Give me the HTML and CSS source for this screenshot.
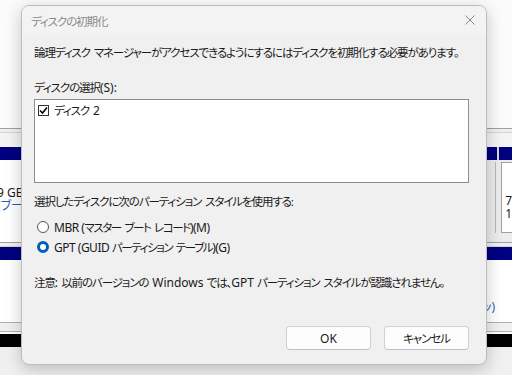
FILE: index.html
```html
<!DOCTYPE html>
<html lang="ja">
<head>
  <meta charset="UTF-8">
  <title>ディスクの初期化</title>
  <link rel="stylesheet" href="styles.css">
</head>
<body>
  <!-- ディスクの管理 (背景) -->
  <div class="backdrop">
    <div class="bd-top"></div>
    <div class="bd-rule"></div>
    <div class="bd-gap"></div>
    <div class="bd-navy">
      <span class="seg seg-b"></span>
    </div>
    <div class="bd-disk">
      <div class="bd-left">
        <span>9 GB</span>
        <span class="blue">(ブート</span>
      </div>
      <div class="bd-right">
        <div class="bd-col"></div>
        <div class="bd-box">
          <span>7</span>
          <span>1</span>
        </div>
      </div>
    </div>
    <div class="bd-rule"></div>
    <div class="bd-navy"></div>
    <div class="bd-disk2">
      <span class="blue">ッ)</span>
    </div>
    <div class="bd-rule2"></div>
    <div class="bd-black"></div>
    <div class="bd-bottom"></div>
  </div>

  <div class="dialog">
    <div class="titlebar">
      <span class="title">ディスクの初期化</span>
      <svg class="close" width="10" height="10" viewBox="0 0 10 10">
        <path d="M0.5 0.5 L9.5 9.5 M9.5 0.5 L0.5 9.5" stroke="#8a8a8a" stroke-width="1" fill="none"/>
      </svg>
    </div>
    <div class="content">
      <p class="intro">論理ディスク マネージャーがアクセスできるようにするにはディスクを初期化する必要があります。</p>
      <p class="label">ディスクの選択<span class="en">(S):</span></p>
      <div class="listbox">
        <div class="list-item">
          <span class="checkbox">
            <svg width="9" height="9" viewBox="0 0 9 9">
              <path d="M1 4.5 L3.5 7 L8 1.5" stroke="#000" stroke-width="1.6" fill="none"/>
            </svg>
          </span>
          <span>ディスク <span class="en">2</span></span>
        </div>
      </div>
      <p class="label label-style">選択したディスクに次のパーティション スタイルを使用する:</p>
      <label class="radio">
        <span class="dot"></span>
        <span><span class="en">MBR (</span>マスター ブート レコード<span class="en">)(M)</span></span>
      </label>
      <label class="radio checked">
        <span class="dot"></span>
        <span><span class="en">GPT (GUID </span>パーティション テーブル<span class="en">)(G)</span></span>
      </label>
      <p class="note">注意<span class="en">: </span>以前のバージョンの <span class="en">Windows </span>では、<span class="en">GPT </span>パーティション スタイルが認識されません。</p>
      <div class="buttons">
        <button class="btn"><span class="en">OK</span></button>
        <button class="btn">キャンセル</button>
      </div>
    </div>
  </div>
</body>
</html>
```

FILE: styles.css
```css
body {
  margin: 0;
  width: 512px;
  height: 375px;
  overflow: hidden;
  position: relative;
  font-family: "Noto Sans", "Noto Sans CJK JP", sans-serif;
  font-size: 11.5px;
  letter-spacing: -1.1px;
  word-spacing: 2px;
  font-feature-settings: "palt";
  color: #1a1a1a;
  background: #fff;
}
.en {
  letter-spacing: 0;
  word-spacing: 0;
  font-size: 12px;
}

/* 背景のディスクの管理ウィンドウ */
.backdrop {
  display: flex;
  flex-direction: column;
  height: 375px;
  letter-spacing: 0;
  word-spacing: 0;
  font-size: 12px;
}
.bd-top {
  height: 128px;
  background: #fbfbfb;
}
.bd-rule {
  height: 3px;
  border-top: 1px solid #a0a0a0;
  border-bottom: 1px solid #d4d4d4;
  background: #f0f0f0;
}
.bd-gap {
  height: 14px;
  background: #f3f3f3;
}
.bd-navy {
  height: 13px;
  background: #000080;
  display: flex;
}
.seg-b {
  margin-left: 497px;
  width: 2px;
  background: #d8d8d8;
}
.bd-disk {
  height: 82px;
  display: flex;
  justify-content: space-between;
  background: #fff;
}
.bd-left {
  display: flex;
  flex-direction: column;
  padding-top: 26px;
  margin-left: -3px;
  line-height: 13px;
  border-right: 2px solid #e8e8e8;
}
.blue {
  color: #1f5fb0;
}
.bd-right {
  display: flex;
  width: 25px;
  padding: 2px 0 9px 0;
  background: #ececec;
}
.bd-col {
  width: 10px;
  border-right: 1px solid #b8b8b8;
  margin-right: 5px;
}
.bd-box {
  flex: 1;
  padding: 31px 0 0 3px;
  display: flex;
  flex-direction: column;
  line-height: 13px;
  background: #fff;
  border-left: 1px solid #a0a0a0;
  border-top: 1px solid #a0a0a0;
  border-bottom: 1px solid #a0a0a0;
}
.bd-disk2 {
  height: 62px;
  background: #fff;
  display: flex;
  justify-content: flex-end;
  align-items: center;
}
.bd-disk2 span {
  margin-right: 17px;
  padding-top: 30px;
}
.bd-rule2 {
  height: 8px;
  border-top: 1px solid #b0b0b0;
  border-bottom: 1px solid #b0b0b0;
  background: #f0f0f0;
  margin-bottom: 2px;
}
.bd-black {
  height: 13px;
  background: #000;
}
.bd-bottom {
  flex: 1;
  background: #f0f0f0;
}

/* ダイアログ本体 */
.dialog {
  position: absolute;
  left: 21px;
  top: 5px;
  width: 464px;
  height: 358px;
  border: 1px solid #bdbdbd;
  border-radius: 8px;
  background: #f0f0f0;
  box-shadow: 0 4px 16px rgba(0,0,0,0.22);
  display: flex;
  flex-direction: column;
  overflow: hidden;
}
.titlebar {
  height: 29px;
  background: #f3f3f3;
  display: flex;
  align-items: center;
  justify-content: space-between;
  padding: 0 10px 0 9px;
}
.title {
  color: #8a8a8a;
}
.close {
  margin-right: 1px;
  margin-top: -1px;
}
.content {
  flex: 1;
  display: flex;
  flex-direction: column;
  padding: 10px 17px 14px 12px;
}
.content p {
  margin: 0;
  line-height: 16px;
  white-space: nowrap;
}
.label {
  margin-top: 19px !important;
}
.label-style {
  margin-top: 11px !important;
}
.listbox {
  margin-top: 3px;
  height: 82px;
  background: #fff;
  border: 1px solid #8a8f96;
}
.list-item {
  display: flex;
  align-items: center;
  gap: 5px;
  height: 20px;
  padding-left: 3px;
}
.checkbox {
  width: 9px;
  height: 9px;
  border: 1px solid #333;
  display: flex;
  align-items: center;
  justify-content: center;
  background: #fff;
}
.radio {
  display: flex;
  align-items: center;
  gap: 5px;
  height: 18px;
  padding-left: 3px;
  letter-spacing: -1.4px;
}
.radio .en {
  letter-spacing: -0.5px;
}
.radio:first-of-type {
  margin-top: 8px;
}
.radio.checked {
  margin-top: 2px;
}
.dot {
  flex: none;
  width: 12px;
  height: 12px;
  border: 1px solid #555;
  border-radius: 50%;
  background: #fff;
  box-sizing: border-box;
}
.radio.checked .dot {
  border: 3.5px solid #005fb8;
}
.note {
  margin-top: 19px !important;
}
.buttons {
  margin-top: auto;
  display: flex;
  justify-content: flex-end;
  gap: 13px;
}
.btn {
  width: 85px;
  height: 24px;
  border: 1px solid #d0d0d0;
  border-bottom-color: #c2c2c2;
  border-radius: 4px;
  background: #fdfdfd;
  font: inherit;
  letter-spacing: inherit;
  font-feature-settings: "palt";
  color: #1a1a1a;
  padding: 0;
}
```
